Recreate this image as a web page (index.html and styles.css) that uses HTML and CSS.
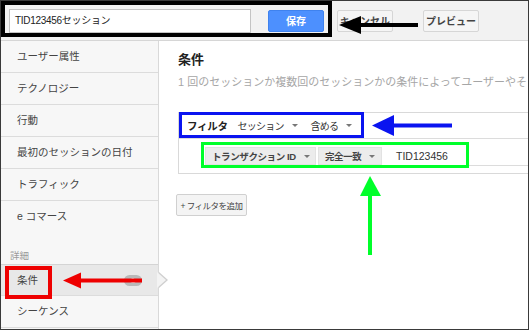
FILE: index.html
```html
<!DOCTYPE html>
<html lang="ja">
<head>
    <meta charset="UTF-8">
    <meta name="viewport" content="width=device-width, initial-scale=1.0">
    <title>セグメント条件</title>
    <link rel="stylesheet" href="styles.css">
</head>
<body>

    <div class="frame">
        <!-- Segment name + actions -->
        <div class="topbar">
            <div class="name-input">TID123456セッション</div>
            <button class="btn btn-save">保存</button>
            <button class="btn btn-cancel">キャンセル</button>
            <button class="btn btn-preview">プレビュー</button>
        </div>

        <div class="main">
            <nav class="sidebar">
                <div class="nav-item">ユーザー属性</div>
                <div class="nav-item">テクノロジー</div>
                <div class="nav-item">行動</div>
                <div class="nav-item">最初のセッションの日付</div>
                <div class="nav-item">トラフィック</div>
                <div class="nav-item no-line">e コマース</div>
                <div class="nav-label">詳細</div>
                <div class="nav-item active">条件<span class="badge">1</span></div>
                <div class="nav-item">シーケンス</div>
            </nav>

            <section class="content">
                <h2>条件</h2>
                <p class="desc">1 回のセッションか複数回のセッションかの条件によってユーザーやそ</p>

                <div class="filter-panel">
                    <div class="filter-head">
                        <b class="filter-title">フィルタ</b>
                        <span class="drop">セッション<i class="caret"></i></span>
                        <span class="drop">含める<i class="caret"></i></span>
                    </div>
                    <div class="filter-row">
                        <span class="chip chip-dim">トランザクション ID<i class="caret"></i></span>
                        <span class="chip chip-op">完全一致<i class="caret"></i></span>
                        <span class="value">TID123456</span>
                    </div>
                </div>

                <button class="add-filter">+ フィルタを追加</button>
            </section>
        </div>

        <!-- Annotation marks drawn over the screenshot -->
        <svg class="marks" width="529" height="330" viewBox="0 0 529 330">
            <rect x="3" y="3" width="327" height="32" fill="none" stroke="#000" stroke-width="4"/>
            <polygon points="339,25 361,16 361,34" fill="#000"/>
            <rect x="358" y="23" width="60" height="4" fill="#000"/>

            <rect x="180.5" y="113.5" width="182" height="23" fill="none" stroke="#0a14f0" stroke-width="3"/>
            <polygon points="372,125.5 394,115 394,136" fill="#0a14f0"/>
            <rect x="392" y="123.5" width="60" height="4" fill="#0a14f0"/>

            <rect x="202.5" y="143.5" width="265" height="23" fill="none" stroke="#00ff2a" stroke-width="3"/>
            <polygon points="370,176 360,196 381,196" fill="#00ff2a"/>
            <rect x="368" y="194" width="4" height="61" fill="#00ff2a"/>

            <rect x="7" y="268" width="43" height="29" fill="none" stroke="#ee0000" stroke-width="4"/>
            <polygon points="63,280.5 81,272.5 81,288.5" fill="#ee0000"/>
            <rect x="79" y="278.5" width="63" height="4" fill="#ee0000"/>
        </svg>
    </div>

</body>
</html>
```

FILE: styles.css
```css
/* Page shell */
body {
    margin: 0;
    font-family: "Liberation Sans", "Noto Sans CJK JP", sans-serif;
    background-color: #ffffff;
}

.frame {
    position: relative;
    width: 529px;
    height: 330px;
    box-sizing: border-box;
    border: 1px solid #3a3a3a;
    overflow: hidden;
    background-color: #ffffff;
}

/* --- Top bar --- */
.topbar {
    height: 39px;
    display: flex;
    align-items: center;
    padding-left: 8px;
    background-color: #f2f2f2;
    border-bottom: 1px solid #d6d6d6;
}

.name-input {
    width: 242px;
    height: 24px;
    box-sizing: border-box;
    border: 1px solid #c4c4c4;
    background-color: #fff;
    font-size: 10px;
    line-height: 22px;
    padding-left: 5px;
    color: #222;
    letter-spacing: -0.3px;
}

.btn {
    height: 22px;
    width: 56px;
    box-sizing: border-box;
    border-radius: 2px;
    font-family: inherit;
    font-size: 10px;
    font-weight: bold;
    padding: 0;
    white-space: nowrap;
    cursor: pointer;
}

.btn-save {
    margin-left: 17px;
    background-color: #4d90fe;
    border: 1px solid #3f82ee;
    color: #ffffff;
}

.btn-cancel {
    margin-left: 13px;
    background-color: #f5f5f5;
    border: 1px solid #d6d6d6;
    color: #444;
}

.btn-preview {
    margin-left: 30px;
    background-color: #f5f5f5;
    border: 1px solid #d6d6d6;
    color: #444;
}

/* --- Main area --- */
.main {
    display: flex;
    height: 288px;
}

.sidebar {
    width: 157px;
    flex-shrink: 0;
    background-color: #f7f7f7;
    border-right: 1px solid #d9d9d9;
}

.nav-item {
    position: relative;
    height: 31px;
    line-height: 31px;
    padding-left: 16px;
    font-size: 10.5px;
    color: #444;
    border-bottom: 1px solid #dcdcdc;
}

.nav-item.no-line {
    border-bottom: none;
}

.nav-label {
    height: 32px;
    box-sizing: border-box;
    padding: 16px 0 0 9px;
    font-size: 9.5px;
    color: #9a9a9a;
}

.nav-item.active {
    background-color: #e8e8e8;
    border-top: 1px solid #d4d4d4;
    height: 30px;
    line-height: 30px;
}

/* little pointer sticking out of the selected row */
.nav-item.active::before,
.nav-item.active::after {
    content: "";
    position: absolute;
    top: 7px;
    right: -10px;
    border: 8px solid transparent;
    border-left: 9px solid #cfcfcf;
    border-right: none;
}

.nav-item.active::after {
    right: -8px;
    border-left-color: #f3f3f3;
}

.badge {
    position: absolute;
    right: 16px;
    top: 10px;
    width: 18px;
    height: 11px;
    border-radius: 6px;
    background-color: #b9b9b9;
    color: #fff;
    font-size: 8px;
    font-weight: bold;
    line-height: 11px;
    text-align: center;
}

/* --- Content --- */
.content {
    flex: 1;
    min-width: 0;
    padding-left: 19px;
    overflow: hidden;
}

.content h2 {
    margin: 11px 0 0;
    font-size: 13px;
    line-height: 16px;
    font-weight: bold;
    color: #222;
}

.desc {
    margin: 7px 0 0;
    font-size: 11px;
    line-height: 14px;
    color: #a6a6a6;
    white-space: nowrap;
}

.filter-panel {
    margin: 23px -20px 0 0;
    border: 1px solid #d9d9d9;
}

.filter-head {
    height: 25px;
    display: flex;
    align-items: center;
    padding-left: 8px;
    border-bottom: 1px solid #dcdcdc;
    font-size: 10px;
    letter-spacing: -0.8px;
    color: #222;
    white-space: nowrap;
}

.filter-title {
    margin-right: 10px;
    font-size: 10.5px;
    letter-spacing: -0.3px;
}

.drop {
    display: flex;
    align-items: center;
    margin-right: 13px;
    color: #333;
}

.caret {
    display: inline-block;
    margin-left: 8px;
    border-left: 3px solid transparent;
    border-right: 3px solid transparent;
    border-top: 3px solid #777;
}

.filter-row {
    height: 34px;
    display: flex;
    align-items: center;
    padding-left: 26px;
}

.chip {
    height: 18px;
    display: flex;
    align-items: center;
    justify-content: space-between;
    box-sizing: border-box;
    padding: 0 8px 0 6px;
    background-color: #ececec;
    border: 1px solid #e2e2e2;
    font-size: 9.5px;
    font-weight: bold;
    letter-spacing: -0.4px;
    color: #444;
    white-space: nowrap;
}

.chip-dim {
    width: 111px;
}

.chip-op {
    width: 64px;
    margin-left: 2px;
}

.value {
    flex: 1;
    height: 18px;
    margin-left: 5px;
    padding-left: 9px;
    font-size: 10.5px;
    line-height: 18px;
    color: #333;
    border-bottom: 1px solid #dcdcdc;
}

.add-filter {
    margin: 20px 0 0 -2px;
    width: 71px;
    height: 22px;
    padding: 0;
    background-color: #f4f4f4;
    border: 1px solid #d0d0d0;
    border-radius: 2px;
    font-family: inherit;
    font-size: 8.5px;
    letter-spacing: -0.5px;
    white-space: nowrap;
    color: #444;
}

/* Annotation layer */
.marks {
    position: absolute;
    top: -1px;
    left: -1px;
    pointer-events: none;
}
```
